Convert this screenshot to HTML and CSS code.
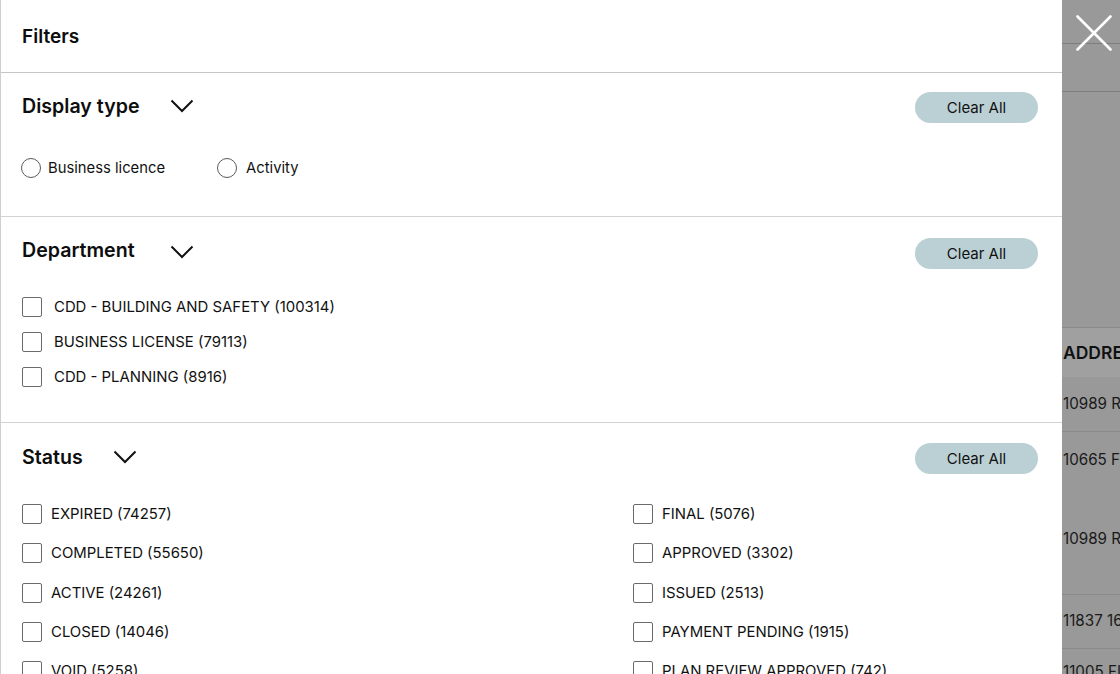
FILE: index.html
```html
<!DOCTYPE html>
<html lang="en">
<head>
<meta charset="utf-8">
<title>Filters</title>
<link rel="stylesheet" href="styles.css">
</head>
<body>
<div class="app">
  <aside class="panel">
    <header class="panel-head"><h1>Filters</h1></header>

    <section class="sec sec-display">
      <div class="sec-head">
        <h2>Display type</h2>
        <svg class="chev" width="24" height="14" viewBox="0 0 24 14"><path d="M1.5 1.5 L12 12 L22.5 1.5" fill="none" stroke="#111" stroke-width="2"/></svg>
        <button class="clear">Clear All</button>
      </div>
      <div class="radios">
        <label class="radio"><span class="circle"></span>Business licence</label>
        <label class="radio radio-wide"><span class="circle"></span>Activity</label>
      </div>
    </section>

    <section class="sec sec-dept">
      <div class="sec-head">
        <h2>Department</h2>
        <svg class="chev" width="24" height="14" viewBox="0 0 24 14"><path d="M1.5 1.5 L12 12 L22.5 1.5" fill="none" stroke="#111" stroke-width="2"/></svg>
        <button class="clear">Clear All</button>
      </div>
      <ul class="checks dept-list">
        <li><span class="box"></span>CDD - BUILDING AND SAFETY (100314)</li>
        <li><span class="box"></span>BUSINESS LICENSE (79113)</li>
        <li><span class="box"></span>CDD - PLANNING (8916)</li>
      </ul>
    </section>

    <section class="sec sec-status">
      <div class="sec-head">
        <h2>Status</h2>
        <svg class="chev" width="24" height="14" viewBox="0 0 24 14"><path d="M1.5 1.5 L12 12 L22.5 1.5" fill="none" stroke="#111" stroke-width="2"/></svg>
        <button class="clear">Clear All</button>
      </div>
      <ul class="checks status-list">
        <li><span class="box"></span>EXPIRED (74257)</li>
        <li><span class="box"></span>FINAL (5076)</li>
        <li><span class="box"></span>COMPLETED (55650)</li>
        <li><span class="box"></span>APPROVED (3302)</li>
        <li><span class="box"></span>ACTIVE (24261)</li>
        <li><span class="box"></span>ISSUED (2513)</li>
        <li><span class="box"></span>CLOSED (14046)</li>
        <li><span class="box"></span>PAYMENT PENDING (1915)</li>
        <li><span class="box"></span>VOID (5258)</li>
        <li><span class="box"></span>PLAN REVIEW APPROVED (742)</li>
      </ul>
    </section>
  </aside>

  <div class="backdrop">
    <div class="bg-top"></div>
    <div class="bg-bar"></div>
    <div class="bg-filler"></div>
    <div class="bg-th">ADDRESS</div>
    <div class="bg-row r1">10989 RAMONA AVE</div>
    <div class="bg-row r2"><span>10665 FOOTHILL BLVD</span><span>10989 RAMONA AVE</span></div>
    <div class="bg-row r3">11837 16TH ST</div>
    <div class="bg-row r4">11005 FIRST AVE</div>
    <button class="close" aria-label="Close">
      <svg width="36" height="36" viewBox="0 0 36 36"><path d="M1.5 1.5 L34.5 34.5 M34.5 1.5 L1.5 34.5" stroke="#fff" stroke-width="2.6" stroke-linecap="round"/></svg>
    </button>
  </div>
</div>
</body>
</html>
```
FILE: styles.css
```css
* { box-sizing: border-box; }
html, body { margin: 0; padding: 0; }
body {
  font-family: Inter, "Noto Sans", "Liberation Sans", sans-serif;
  color: #111;
  background: #999;
  overflow: hidden;
}
.app {
  display: flex;
  width: 1120px;
  height: 674px;
}
.panel {
  width: 1062px;
  flex: none;
  height: 674px;
  overflow: hidden;
  background: #fff;
  border-left: 1px solid #cfcfcf;
}
.panel-head {
  height: 73px;
  border-bottom: 1px solid #c6c6c6;
  display: flex;
  align-items: center;
  padding: 0 21px 0;
}
.panel-head h1 {
  margin: 0;
  font-size: 19px;
  font-weight: 600;
  color: #0d0d0d;
}
.sec {
  border-bottom: 1px solid #d2d2d2;
  padding: 0 24px 0 21px;
}
.sec-head {
  display: flex;
  align-items: center;
  height: 31px;
}
.sec-head h2 {
  margin: 0 0 3px;
  font-size: 19.6px;
  font-weight: 600;
  color: #0d0d0d;
}
.chev { margin-left: 31px; margin-top: -3px; }
.sec-dept h2 { margin-bottom: 8px; }
.sec-dept .chev { margin-left: 35px; margin-top: -4px; }
.sec-status .chev { margin-left: 30px; }
.clear {
  margin-left: auto;
  width: 123px;
  height: 31px;
  border: 0;
  border-radius: 16px;
  background: #bbd0d4;
  font-family: inherit;
  font-size: 15px;
  color: #111;
  padding: 0;
}
.sec-display { padding-top: 19px; padding-bottom: 38px; }
.sec-dept { padding-top: 21px; padding-bottom: 35px; }
.sec-status { padding-top: 20px; padding-bottom: 0; border-bottom: 0; }

.radios {
  display: flex;
  gap: 52px;
  margin-top: 35px;
  margin-left: -1px;
}
.radio {
  display: flex;
  align-items: center;
  gap: 7px;
  font-size: 14.8px;
  height: 20px;
}
.radio-wide { gap: 9px; }
.circle {
  width: 20px;
  height: 20px;
  border-radius: 50%;
  border: 1px solid #5a5a5a;
}
.checks {
  list-style: none;
  margin: 0;
  padding: 0;
}
.checks li {
  display: flex;
  align-items: center;
  height: 20px;
  font-size: 14.9px;
  white-space: nowrap;
}
.box {
  width: 20px;
  height: 20px;
  flex: none;
  border: 1px solid #6a6a6a;
  border-radius: 2px;
}
.dept-list {
  margin-top: 28px;
  display: flex;
  flex-direction: column;
  gap: 15px;
}
.dept-list .box { margin-right: 12px; }
.status-list {
  margin-top: 30px;
  display: grid;
  grid-template-columns: 611px 1fr;
  row-gap: 19.3px;
}
.status-list .box { margin-right: 9px; }

.backdrop {
  position: relative;
  flex: 1;
  height: 674px;
  background: #999;
  display: flex;
  flex-direction: column;
  overflow: hidden;
  white-space: nowrap;
  color: #1a1a1a;
}
.bg-top { height: 44px; border-bottom: 1px solid #7d7d7d; flex: none; }
.bg-bar { height: 48px; border-bottom: 1px solid #7d7d7d; flex: none; }
.bg-filler { height: 236px; border-bottom: 1px solid #8a8a8a; flex: none; }
.bg-th {
  height: 49px;
  flex: none;
  background: #a0a0a0;
  font-weight: 600;
  font-size: 17.5px;
  padding: 14px 0 0 1px;
  color: #111;
}
.bg-row {
  flex: none;
  font-size: 15.2px;
  padding-left: 1px;
  border-bottom: 1px solid #8a8a8a;
}
.r1 { height: 55px; padding-top: 17px; }
.r2 { height: 163px; padding-top: 18px; display: flex; flex-direction: column; gap: 60px; }
.r3 { height: 54px; padding-top: 16px; }
.r4 { height: 40px; padding-top: 13px; border-bottom: 0; }
.close {
  position: absolute;
  top: 15px;
  left: 14px;
  width: 36px;
  height: 36px;
  padding: 0;
  border: 0;
  background: transparent;
}
.close svg { display: block; }
```
